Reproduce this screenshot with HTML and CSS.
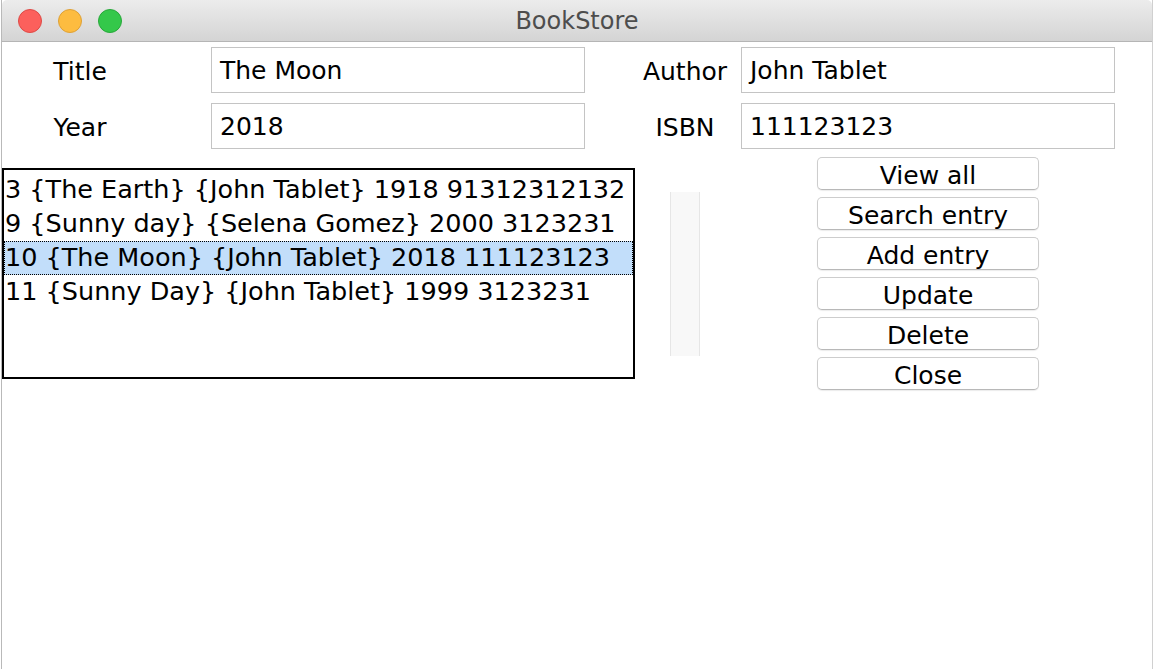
FILE: index.html
```html
<!DOCTYPE html>
<html>
<head>
<meta charset="utf-8">
<title>BookStore</title>
<link rel="stylesheet" href="styles.css">
</head>
<body>
<div class="window">
  <header class="titlebar">
    <div class="lights">
      <span class="light red"></span>
      <span class="light yellow"></span>
      <span class="light green"></span>
    </div>
    <div class="title">BookStore</div>
  </header>
  <main class="content">
    <section class="form">
      <div class="row">
        <label class="label left">Title</label>
        <div class="entry">The Moon</div>
        <label class="label right">Author</label>
        <div class="entry">John Tablet</div>
      </div>
      <div class="row">
        <label class="label left">Year</label>
        <div class="entry">2018</div>
        <label class="label right">ISBN</label>
        <div class="entry">111123123</div>
      </div>
    </section>
    <section class="lower">
      <div class="listbox">
        <div class="item">3 {The Earth} {John Tablet} 1918 91312312132</div>
        <div class="item">9 {Sunny day} {Selena Gomez} 2000 3123231</div>
        <div class="item selected">10 {The Moon} {John Tablet} 2018 111123123</div>
        <div class="item">11 {Sunny Day} {John Tablet} 1999 3123231</div>
      </div>
      <div class="scrollbar"></div>
      <div class="buttons">
        <button class="btn">View all</button>
        <button class="btn">Search entry</button>
        <button class="btn">Add entry</button>
        <button class="btn">Update</button>
        <button class="btn">Delete</button>
        <button class="btn">Close</button>
      </div>
    </section>
  </main>
</div>
</body>
</html>
```
FILE: styles.css
```css
html, body {
  margin: 0;
  padding: 0;
  background: #ffffff;
}
.window {
  width: 1152px;
  height: 669px;
  box-sizing: border-box;
  border-left: 1px solid #b9b9b9;
  border-right: 1px solid #d0d0d0;
  font-family: "DejaVu Sans", "Liberation Sans", sans-serif;
  color: #000;
  overflow: hidden;
  margin-left: 1px;
}
.titlebar {
  height: 41px;
  border-bottom: 1px solid #b5b5b5;
  background: linear-gradient(#ececec, #d4d4d4);
  display: flex;
  align-items: center;
  position: relative;
  border-top-left-radius: 5px;
  border-top-right-radius: 5px;
}
.lights {
  display: flex;
  gap: 16px;
  padding-left: 16px;
}
.light {
  width: 24px;
  height: 24px;
  border-radius: 50%;
  box-sizing: border-box;
}
.red { background: #fc605c; border: 1px solid #de4a46; }
.yellow { background: #fdbc40; border: 1px solid #dea136; }
.green { background: #34c84a; border: 1px solid #28a83a; }
.title {
  position: absolute;
  left: 0;
  right: 0;
  text-align: center;
  font-size: 24px;
  color: #4d4d4d;
  pointer-events: none;
}
.content {
  padding-top: 5px;
}
.form {
  display: flex;
  flex-direction: column;
  gap: 10px;
  padding-left: 6px;
}
.row {
  display: flex;
  align-items: center;
}
.label {
  font-size: 25px;
  text-align: center;
  padding-top: 2px;
}
.label.left { width: 144px; margin-right: 59px; }
.label.right { width: 112px; margin-left: 44px; }
.entry {
  width: 374px;
  height: 46px;
  box-sizing: border-box;
  border: 1px solid #c4c4c4;
  padding-left: 8px;
  padding-top: 2px;
  font-size: 25px;
  line-height: 42px;
}
.lower {
  display: flex;
  align-items: flex-start;
  padding-top: 8px;
}
.listbox {
  width: 633px;
  height: 211px;
  box-sizing: border-box;
  border: 2px solid #000;
  margin-top: 11px;
  padding-top: 3px;
}
.item {
  height: 34px;
  line-height: 33px;
  font-size: 25.5px;
  padding-left: 1px;
  white-space: nowrap;
  box-sizing: border-box;
}
.item.selected {
  background: #c2defa;
  outline: 1px dotted #000;
  outline-offset: -1px;
}
.scrollbar {
  width: 30px;
  height: 164px;
  margin-top: 35px;
  margin-left: 35px;
  background: #f8f8f8;
  border-left: 1px solid #e6e6e6;
  border-right: 1px solid #e6e6e6;
  box-sizing: border-box;
}
.buttons {
  display: flex;
  flex-direction: column;
  gap: 7px;
  margin-left: 117px;
}
.btn {
  width: 222px;
  height: 33px;
  box-sizing: border-box;
  border: 1px solid #cdcdcd;
  border-bottom-color: #b8b8b8;
  border-radius: 5px;
  background: #fff;
  box-shadow: 0 1px 1px rgba(0,0,0,0.08);
  font-family: "DejaVu Sans", "Liberation Sans", sans-serif;
  font-size: 25px;
  line-height: 33px;
  padding: 1px 0 0 0;
  color: #000;
}
```
